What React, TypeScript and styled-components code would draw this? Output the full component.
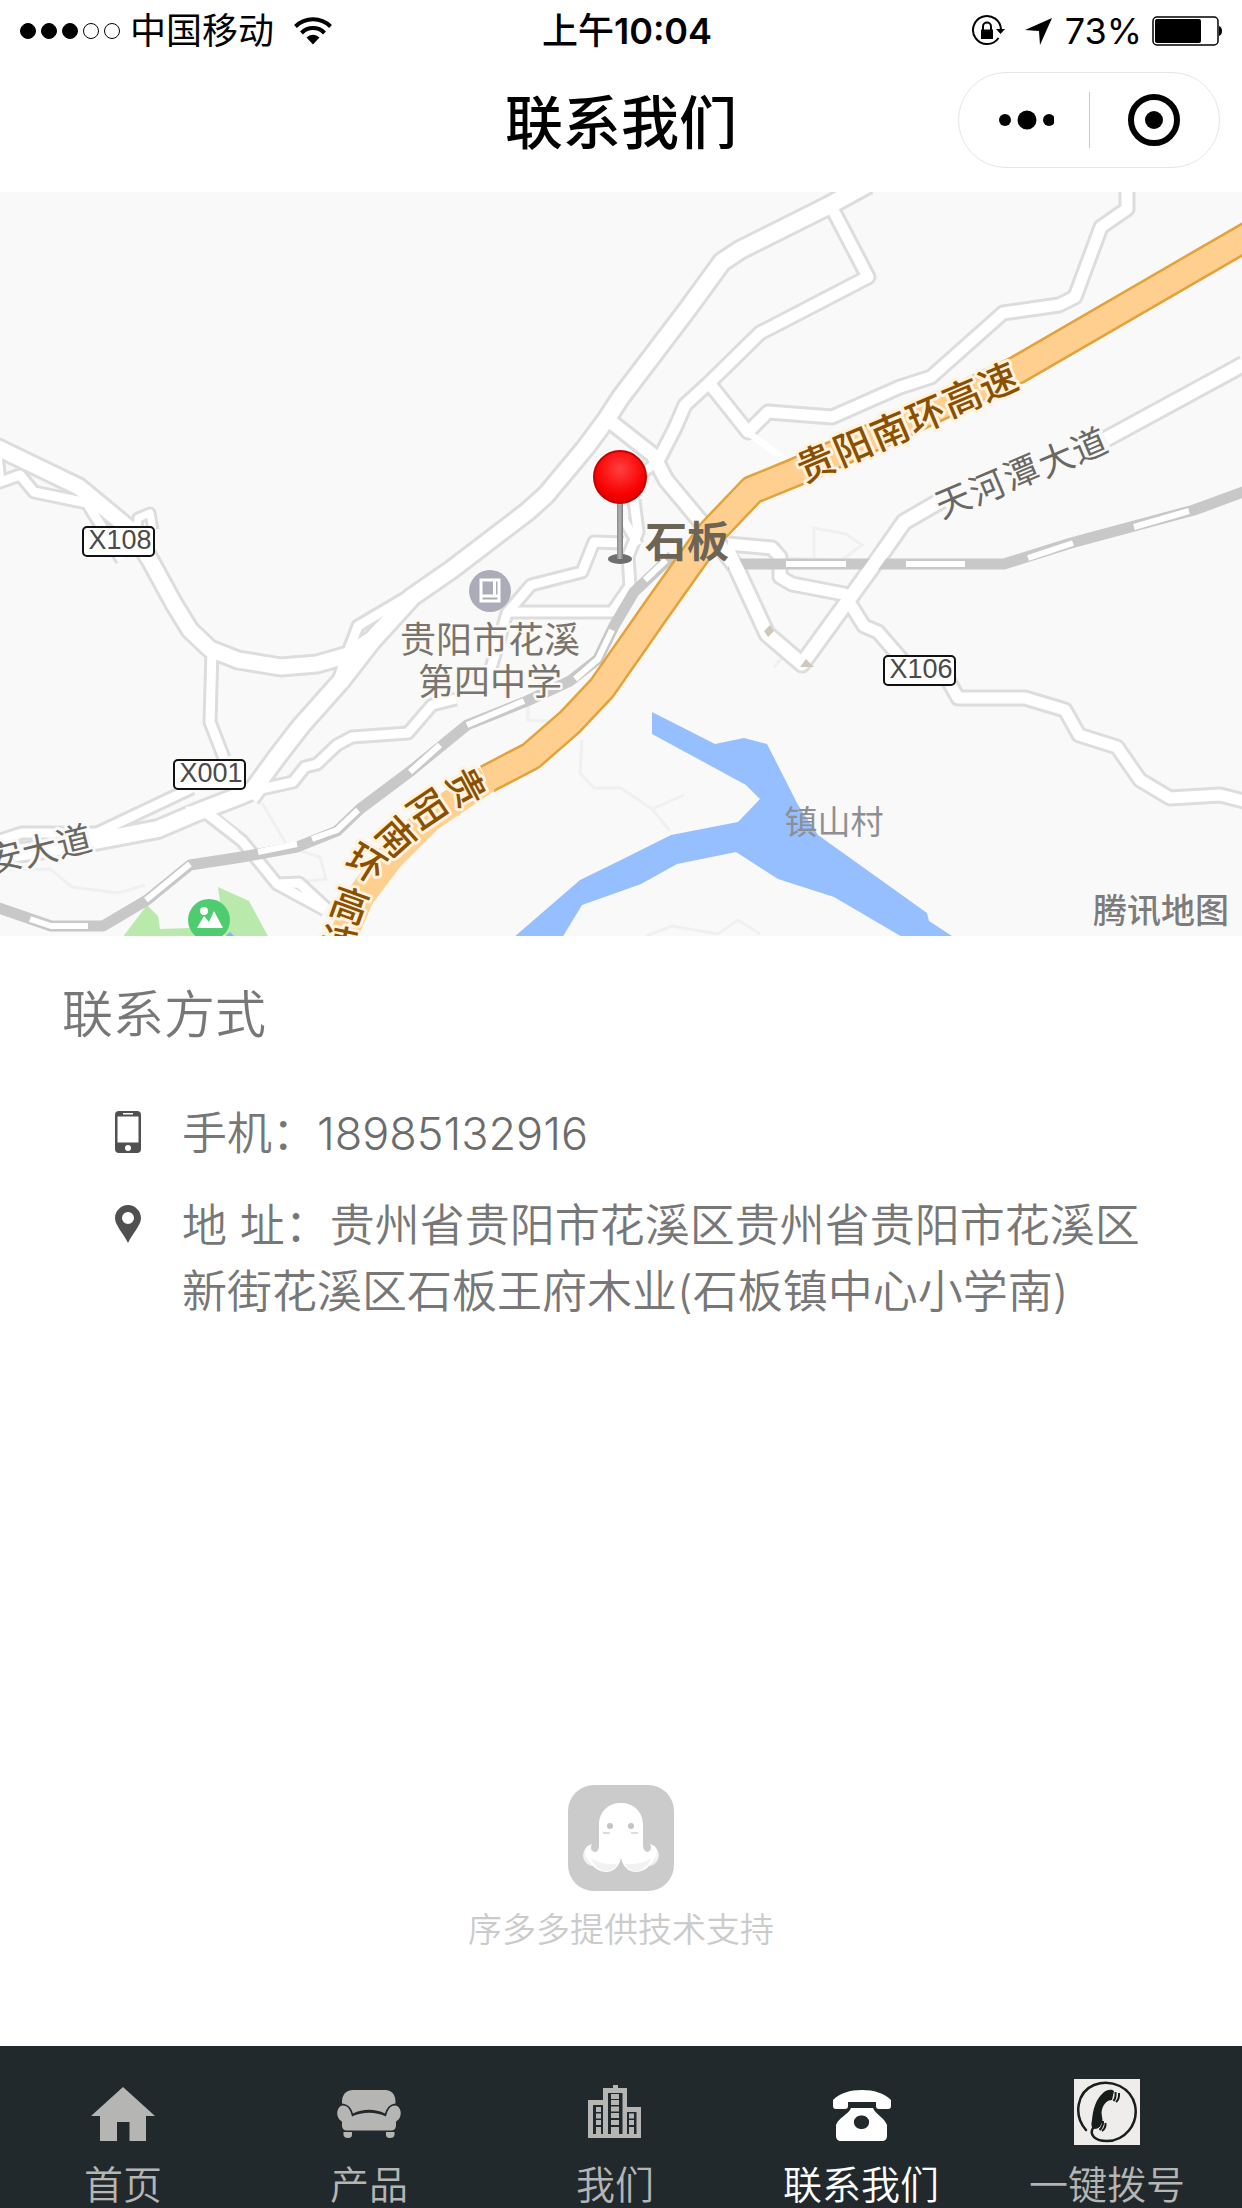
import React from "react";
import styled, { createGlobalStyle } from "styled-components";

const GlobalStyle = createGlobalStyle`
  * { box-sizing: border-box; }
  body {
    margin: 0;
    background: #fff;
    font-family: Inter, "Noto Sans CJK SC", sans-serif;
  }
  a { color: inherit; text-decoration: none; }
`;

const Screen = styled.div`
  display: flex;
  flex-direction: column;
  min-height: 100vh;
`;

/* ---------- status bar ---------- */

const StatusBar = styled.div`
  display: grid;
  grid-template-columns: 1fr auto 1fr;
  align-items: center;
  height: 60px;
  padding: 0 20px;
  font-size: 36px;
  line-height: 62px;
  color: #000;
`;

const StatusGroup = styled.div<{ $end?: boolean }>`
  display: flex;
  align-items: center;
  justify-content: ${(p) => (p.$end ? "flex-end" : "flex-start")};
  gap: 10px;
`;

const StatusTime = styled.time`
  padding-left: 12px;
  font-weight: 500;
`;

const Clock = styled.span`
  font-weight: 600;
`;

const Signal = styled.div`
  display: flex;
  gap: 5px;
`;

const SignalDot = styled.span<{ $on: boolean }>`
  width: 16px;
  height: 16px;
  border-radius: 50%;
  border: 1px solid #000;
  background: ${(p) => (p.$on ? "#000" : "transparent")};
`;

const WifiIcon = styled.svg`
  width: 38px;
  height: 30px;
  margin-left: 10px;
`;

const SmallIcon = styled.svg`
  width: 34px;
  height: 34px;
  margin-left: 6px;
`;

const BatteryIcon = styled.svg`
  width: 70px;
  height: 30px;
`;

/* ---------- header ---------- */

const Header = styled.header`
  display: grid;
  grid-template-columns: 1fr auto 1fr;
  align-items: center;
  height: 132px;
  padding: 0 22px 12px;
`;

const Title = styled.h1`
  grid-column: 2;
  margin: 0;
  padding-top: 6px;
  font-size: 58px;
  line-height: 72px;
  font-weight: 500;
`;

const Capsule = styled.div`
  justify-self: end;
  display: flex;
  align-items: center;
  width: 262px;
  height: 96px;
  border: 1px solid #e6e6e6;
  border-radius: 48px;
`;

const CapsuleButton = styled.button`
  flex: 1;
  display: flex;
  align-items: center;
  justify-content: center;
  height: 56px;
  padding: 0;
  border: 0;
  background: none;
  & + & {
    border-left: 1px solid #c9c9c9;
  }
`;

const CapsuleIcon = styled.svg`
  width: 60px;
  height: 54px;
`;

/* ---------- map ---------- */

const MapView = styled.svg`
  display: block;
  width: 100%;
  height: auto;
  background: #f9f9f9;
`;

/* ---------- contact details ---------- */

const Contact = styled.main`
  flex: 1;
  padding: 46px 62px 0;
  color: #777;
  font-weight: 350;
`;

const SectionTitle = styled.h2`
  margin: 0 0 53px;
  font-size: 51px;
  line-height: 66px;
  font-weight: 350;
`;

const ContactRow = styled.div`
  display: flex;
  gap: 40px;
  margin: 0 0 26px 52px;
  font-size: 45px;
  line-height: 66px;
`;

const RowIcon = styled.svg`
  flex: none;
  width: 28px;
  height: 66px;
  fill: #505050;
`;

const RowText = styled.p`
  flex: 1;
  margin: 0;
`;

const PhoneLink = styled.a`
  color: #6c6c6c;
  font-weight: 300;
`;

/* ---------- credit ---------- */

const Credit = styled.footer`
  display: flex;
  flex-direction: column;
  align-items: center;
  gap: 14px;
  padding-bottom: 92px;
  color: #cbcbcb;
  font-size: 34px;
  line-height: 48px;
  font-weight: 350;
`;

const CreditLogo = styled.svg`
  width: 108px;
  height: 108px;
`;

/* ---------- tab bar ---------- */

const TabBar = styled.nav`
  display: flex;
  padding: 33px 12px 0 0;
  background: #21292c;
`;

const Tab = styled.a<{ $active?: boolean }>`
  flex: 1;
  display: flex;
  flex-direction: column;
  align-items: center;
  gap: 17px;
  font-size: 39px;
  line-height: 46px;
  font-weight: 350;
  color: ${(p) => (p.$active ? "#fff" : "#b5b5b4")};
  white-space: nowrap;
`;

const TabIcon = styled.svg`
  width: 66px;
  height: 66px;
`;

const iconGrey = "#b5b5b4";

/* ---------- map data ---------- */

type Road = { w: number; d: string };

const roads: Road[] = [
  { w: 9, d: "M-4 446 0 482 20 475 34 492 87 503 103 529 122 560" },
  { w: 7, d: "M137 528 138 518 150 513 153 530" },
  { w: 9, d: "M0 840 22 833 97 833 192 788" },
  { w: 9, d: "M212 649 210 722 224 758" },
  { w: 9, d: "M253 800 261 789 293 782 305 767 317 764 337 745 352 737 408 733 432 705 456 699" },
  { w: 9, d: "M489 675 507 613 531 585 582 572 594 542 624 543" },
  { w: 9, d: "M507 612 612 612 630 586 628 556 638 532 634 500" },
  { w: 8, d: "M624 520 638 545M653 465 634 480 628 500" },
  { w: 9, d: "M206 813 242 841 277 884 325 910M277 884 299 883 326 908" },
  { w: 9, d: "M412 594 358 626 345 660 337 684" },
  { w: 15, d: "M-4 447 79 487 131 530 150 560 174 604 190 630 210 649 238 660 281 667 317 664 348 655 372 639 412 597" },
  { w: 11, d: "M833 210 868 277 760 333 709 383 685 405 675 428 657 463" },
  { w: 11, d: "M709 383 748 432 768 412 832 417 900 387 931 377 1003 313 1059 305 1075 297 1101 227 1127 209 1127 190" },
  { w: 11, d: "M728 544 772 548 780 557 780 577 792 584 844 594 864 626 878 632 904 662 948 680 958 698 1025 698 1065 710 1079 735 1117 747 1140 780 1170 798 1220 795 1244 801" },
  { w: 13, d: "M606 418 653 455 666 480 716 540 736 567 767 634 802 664 876 562 904 522 942 500M1106 439 1244 364" },
  { w: 16, d: "M868 184 828 206 740 250 722 262 687 310 621 397 606 420 586 447 546 495 527 512 451 570 412 597 372 641 341 681 301 726 277 757 253 790 242 795 198 812 158 829 79 844 -4 856" },
];

const footpaths =
  "M0 870 50 869 72 887 118 893 145 885M262 803 288 847 320 857 326 879 290 883M582 740 580 773 594 788 621 788M621 788 652 809 684 795M652 809 670 831M646 936 672 926 718 934 738 920 760 934M814 566 814 528 846 534 862 545 842 560 784 558M784 655 774 667M528 703 528 720 560 722";

const rails = [
  "M-4 907 51 926 103 926 147 900 190 865 242 857 297 847 337 831 360 809 412 770 467 725 527 701 570 681 598 659 614 626 634 592 672 556",
  "M728 564 1004 564 1071 543 1194 510 1246 491",
];

const railGaps =
  "M30 919 51 926 88 926M146 900 190 864M258 852 297 844M312 839 337 830 358 810M410 772 440 745M467 725 524 701M575 679 598 659 612 630M645 580 666 560M786 564 846 564M906 564 965 564M1028 558 1073 543M1134 527 1189 511";

const highway =
  "M1262 228 1017 370 900 425 796 472 752 490 711 533 655 612 602 688 570 722 531 756 487 779";
const highwaySouth = "M487 779 428 819 390 857 360 897 341 941";

type Glyph = [char: string, cx: number, cy: number, angle: number];

/** Lays a street name along its road: each glyph is given by its centre and its angle. */
function StreetName({
  glyphs,
  size,
  color,
  halo,
  weight = 400,
}: {
  glyphs: Glyph[];
  size: number;
  color: string;
  halo: string;
  weight?: number;
}) {
  const place = glyphs.map(([, cx, cy, deg]) => {
    const a = (deg * Math.PI) / 180;
    const dx = -size / 2;
    const dy = size * 0.38;
    return [
      cx + dx * Math.cos(a) - dy * Math.sin(a),
      cy + dx * Math.sin(a) + dy * Math.cos(a),
    ];
  });
  return (
    <text
      x={place.map((p) => Math.round(p[0])).join(" ")}
      y={place.map((p) => Math.round(p[1])).join(" ")}
      rotate={glyphs.map((g) => g[3]).join(" ")}
      fontSize={size}
      fontWeight={weight}
      fill={color}
      stroke={halo}
      strokeWidth={6}
      strokeLinejoin="round"
      paintOrder="stroke"
    >
      {glyphs.map((g) => g[0]).join("")}
    </text>
  );
}

function RoadBadge({ x, y, code }: { x: number; y: number; code: string }) {
  return (
    <g>
      <rect x={x} y={y} width="71" height="29" rx="4" fill="#fff" stroke="#111" strokeWidth="2" />
      <text x={x + 37} y={y + 22} textAnchor="middle" fontSize="27" fill="#4a4a4a" fontFamily="'Liberation Sans', sans-serif">
        {code}
      </text>
    </g>
  );
}

function LocationMap() {
  return (
    <MapView viewBox="0 192 1242 744" role="img" aria-label="地图">
      <defs>
        <radialGradient id="pinHead" cx="0.5" cy="0.35" r="0.65">
          <stop offset="0" stopColor="#ff4040" />
          <stop offset="0.75" stopColor="#f80000" />
          <stop offset="1" stopColor="#d80000" />
        </radialGradient>
        <linearGradient id="pinStem">
          <stop offset="0" stopColor="#8a8a8a" />
          <stop offset="0.5" stopColor="#b5b5b5" />
          <stop offset="1" stopColor="#777" />
        </linearGradient>
      </defs>

      <path fill="#b9eaac" d="M122 938 147 905 158 916 160 929 190 928 215 938ZM218 887 249 901 269 938 225 938Z" />
      <path
        fill="#96bfff"
        d="M652 712 715 744 744 738 767 744 798 805 818 835 927 913 929 921 955 938 904 938 834 897 778 879 736 852 677 864 641 884 582 905 562 938 513 938 580 880 621 860 671 835 738 822 760 799 746 785 652 734Z"
      />

      <path d={footpaths} fill="none" stroke="#f0f0f0" strokeWidth="3" />
      <g fill="none" strokeLinejoin="round">
        {roads.map((r) => (
          <path key={r.d} d={r.d} stroke="#dddddd" strokeWidth={r.w + 6} />
        ))}
        {roads.map((r) => (
          <path key={r.d} d={r.d} stroke="#fff" strokeWidth={r.w} />
        ))}
        <path d="M750 434 788 462M186 810 206 810 236 834" stroke="#fff" strokeWidth="7" />
        {rails.map((d) => (
          <path key={d} d={d} stroke="#c8c8c8" strokeWidth="11" />
        ))}
        <path d={railGaps} stroke="#fff" strokeWidth="6" />
        <path d="M864 578 885 549M727 549 739 573" stroke="#fff" strokeWidth="13" />
        <path d={highway} stroke="#e3a23a" strokeWidth="30" />
        <path d={highway} stroke="#ffcf8f" strokeWidth="25" />
        <path d={highwaySouth} stroke="#ffcf8f" strokeWidth="28" />
      </g>
      <path fill="#cfc8bb" d="M764 631 770 625 774 631 768 637ZM800 667 806 659 814 667Z" />

      <RoadBadge x={83} y={527} code="X108" />
      <RoadBadge x={174} y={760} code="X001" />
      <RoadBadge x={884} y={656} code="X106" />

      <StreetName
        size={38}
        color="#8a5000"
        halo="#fff3df"
        weight={500}
        glyphs={[["贵", 816, 462, -23], ["阳", 853, 446, -23], ["南", 890, 430, -23], ["环", 926, 414, -23], ["高", 962, 397, -23], ["速", 998, 381, -23]]}
      />
      <StreetName
        size={38}
        color="#8a5000"
        halo="#fff3df"
        weight={500}
        glyphs={[["贵", 467, 787, 62], ["阳", 428, 809, 56], ["南", 396, 836, 48], ["环", 367, 863, 32], ["高", 350, 905, 20], ["速", 339, 943, 12]]}
      />
      <StreetName
        size={35}
        color="#6b6762"
        halo="#f9f9f9"
        weight={400}
        glyphs={[["天", 953, 500, -23], ["河", 987, 487, -23], ["潭", 1021, 472, -23], ["大", 1056, 459, -23], ["道", 1089, 445, -23]]}
      />
      <StreetName
        size={35}
        color="#6b6762"
        halo="#f9f9f9"
        glyphs={[["安", 5, 857, -14], ["大", 40, 850, -14], ["道", 74, 841, -14]]}
      />

      <circle cx="490" cy="591" r="21" fill="#abacb8" />
      <path fill="none" stroke="#fff" strokeWidth="3" d="M481 580h18v21h-18ZM481 596h18M494.500 581v15" />

      <circle cx="209" cy="920" r="21" fill="#4fcb70" />
      <path fill="#fff" d="M197 928 204 916 209 922 214 911 223 928Z" />
      <circle cx="204" cy="911" r="4" fill="#fff" />
      <path fill="#7fb4f5" d="M224 938 230 932 236 938Z" />

      <g textAnchor="middle" strokeLinejoin="round" paintOrder="stroke">
        <g fontSize="36" fill="#78746f" stroke="#fbf9f5" strokeWidth="5">
          <text x="490" y="653">贵阳市花溪</text>
          <text x="490" y="695">第四中学</text>
        </g>
        <text x="687" y="557" fontSize="42" fontWeight="700" fill="#6c6455">石板</text>
        <text x="834" y="834" fontSize="33" fill="#8d8f93">镇山村</text>
        <text x="1161" y="923" fontSize="34" fontWeight="500" fill="#7c7c7c">腾讯地图</text>
      </g>

      <ellipse cx="620" cy="559" rx="12" ry="5" fill="#6f6f6f" />
      <rect x="617" y="500" width="6" height="59" fill="url(#pinStem)" />
      <circle cx="620" cy="477" r="26" fill="url(#pinHead)" stroke="#c80000" strokeWidth="2" />
    </MapView>
  );
}

/* ---------- tabs ---------- */

const homeIcon = <path fill={iconGrey} d="M33 8 65 37H56V62H39.500V43H27V62H10V37H1Z" />;

const sofaIcon = (
  <g fill={iconGrey}>
    <path d="M17 11H49C56 11 60 16 59.500 24.500 53 25 50.500 30 49 34.500 39 29.500 27 29.500 17 34.500 15.500 30 13 25 6 24.500 5.500 16 10 11 17 11Z" />
    <path d="M7 26.500C12 26.500 14.500 31 16 37.500 27 32.500 39 32.500 50 37.500 51.500 31 54 26.500 59 26.500 64 26.500 66 34 64 38 63 41 60 42 60 43V46C60 50 58 51.500 55 51.500H11C8 51.500 6 50 6 46V43C6 42 3 41 2 38 0 34 2 26.500 7 26.500Z" />
    <path d="M7.500 53H16V56Q16 59 12 59 8 59 7.500 56ZM50 53H58.500V56Q58 59 54 59 50 59 50 56Z" />
  </g>
);

const officeIcon = (
  <g fill={iconGrey}>
    <path
      fillRule="evenodd"
      d="M6 21H21V9H31V6H36V9H45V28H59V59H6ZM11 26V55H21V26ZM26 14V55H40.500V14ZM45 33V55H54.500V33Z"
    />
    {[15, 21, 27.5, 34, 41].map((y) => (
      <rect key={y} x="29" y={y} width="8" height="5" />
    ))}
    {[28, 34.5, 41].map((y) => (
      <rect key={y} x="14" y={y} width="5" height="5" />
    ))}
    {[34.5, 41].map((y) => (
      <rect key={y} x="47" y={y} width="5" height="5" />
    ))}
    <path d="M29 48h8v8h-8ZM14 48h5v8h-5ZM47 48h5v8h-5Z" />
  </g>
);

const telephoneIcon = (
  <g fill="#fff">
    <path d="M5 21C12 14 22 11 34 11 46 11 56 14 63 21V27C63 29 62 30 60 30H51C49 30 48 29 48 27V23H20V27C20 29 19 30 17 30H8C6 30 5 29 5 27Z" />
    <path
      fillRule="evenodd"
      d="M23 29H45C48 36 56 38 59 46V57C59 60 57 62 54 62H13C10 62 8 60 8 57V46C11 38 20 36 23 29ZM33.500 36.500A6.800 6.800 0 1 0 33.500 50 6.800 6.800 0 1 0 33.500 36.500Z"
    />
  </g>
);

const dialIcon = (
  <g>
    <rect width="66" height="66" fill="#efedeb" />
    <path
      fill="none"
      stroke="#171d1a"
      strokeWidth="2.500"
      strokeLinecap="round"
      d="M12 51C-1 36 3 13 20 6 38-1 57 9 61 26 65 46 50 62 33 62 21 62 15 56 19 49"
    />
    <path fill="#171d1a" d="M29 14C33 10 38 10 40 12L38 21C32 21 28 27 27.500 34L28.500 41C28 46 25 50 21 50 17 49 17 46 18 41 19 30 22 20 29 14Z" />
    <path fill="none" stroke="#171d1a" strokeWidth="2" d="M41.500 13Q42 19 39.500 22M45 14Q45.500 20 42 23M29 42Q29.500 47 25.500 51M31.500 44Q32 49 28 52" />
  </g>
);

const tabs = [
  { label: "首页", icon: homeIcon },
  { label: "产品", icon: sofaIcon },
  { label: "我们", icon: officeIcon },
  { label: "联系我们", icon: telephoneIcon, active: true },
  { label: "一键拨号", icon: dialIcon },
];

export default function App() {
  return (
    <Screen>
      <GlobalStyle />
      <StatusBar>
        <StatusGroup>
          <Signal>
            {[true, true, true, false, false].map((on, i) => (
              <SignalDot key={i} $on={on} />
            ))}
          </Signal>
          <span>中国移动</span>
          <WifiIcon viewBox="0 0 38 30" fill="none" stroke="#000" strokeWidth="4">
            <path d="M1.500 10.500A25 25 0 0 1 36.500 10.500M7.500 17A16 16 0 0 1 30.500 17" />
            <path d="M19 28.500 12.500 21.500A9 9 0 0 1 25.500 21.500Z" fill="#000" stroke="none" />
          </WifiIcon>
        </StatusGroup>
        <StatusTime>
          上午<Clock>10:04</Clock>
        </StatusTime>
        <StatusGroup $end>
          <SmallIcon viewBox="0 0 34 34">
            <path d="M27.500 24A14 14 0 1 1 30 16" fill="none" stroke="#000" strokeWidth="2" />
            <path d="M25 15H34L29.500 20Z" />
            <path d="M10 15.500H22V25H10Z" />
            <path d="M12 16V12.500A4 4 0 0 1 20 12.500V16" fill="none" stroke="#000" strokeWidth="2" />
          </SmallIcon>
          <SmallIcon viewBox="0 0 34 34">
            <path d="M31 4 19 31 18 17 4 16Z" />
          </SmallIcon>
          <span>73%</span>
          <BatteryIcon viewBox="0 0 70 30">
            <rect x="1" y="1" width="65" height="28" rx="4" fill="none" stroke="#000" strokeWidth="1.500" />
            <rect x="3" y="3" width="46" height="24" rx="2" />
            <path d="M67 10Q70 11 70 15T67 20Z" />
          </BatteryIcon>
        </StatusGroup>
      </StatusBar>

      <Header>
        <Title>联系我们</Title>
        <Capsule>
          <CapsuleButton type="button" aria-label="更多">
            <CapsuleIcon viewBox="0 0 60 54">
              <circle cx="11" cy="27" r="6" />
              <circle cx="33" cy="27" r="9.500" />
              <circle cx="55" cy="27" r="6" />
            </CapsuleIcon>
          </CapsuleButton>
          <CapsuleButton type="button" aria-label="关闭">
            <CapsuleIcon viewBox="0 0 60 54">
              <circle cx="30" cy="27" r="23" fill="none" stroke="#000" strokeWidth="6" />
              <circle cx="30" cy="27" r="9" />
            </CapsuleIcon>
          </CapsuleButton>
        </Capsule>
      </Header>

      <LocationMap />

      <Contact>
        <SectionTitle>联系方式</SectionTitle>
        <ContactRow>
          <RowIcon viewBox="0 0 28 66">
            <path
              fillRule="evenodd"
              d="M5 10H23Q27 10 27 14V48Q27 52 23 52H5Q1 52 1 48V14Q1 10 5 10ZM3.500 15.500V41.500H24.500V15.500ZM9 12V13.500H19V12ZM14 44A3 3 0 1 0 14 50 3 3 0 1 0 14 44Z"
            />
          </RowIcon>
          <RowText>
            手机：<PhoneLink href="tel:18985132916">18985132916</PhoneLink>
          </RowText>
        </ContactRow>
        <ContactRow>
          <RowIcon viewBox="0 0 28 66">
            <path
              fillRule="evenodd"
              d="M14 12C21 12 27 18 27 25 27 32 19 40 14 50 9 40 1 32 1 25 1 18 7 12 14 12ZM14 19A6 6 0 1 0 14 31 6 6 0 1 0 14 19Z"
            />
          </RowIcon>
          <RowText>地 址：贵州省贵阳市花溪区贵州省贵阳市花溪区新街花溪区石板王府木业(石板镇中心小学南)</RowText>
        </ContactRow>
      </Contact>

      <Credit>
        <CreditLogo viewBox="0 0 108 108">
          <defs>
            <linearGradient id="legShade" x1="0" y1="0" x2="0" y2="1">
              <stop offset="0" stopColor="#fff" />
              <stop offset="1" stopColor="#ececec" />
            </linearGradient>
          </defs>
          <rect x="1" y="1" width="106" height="106" rx="26" fill="#cbcbcb" />
          <path
            fill="url(#legShade)"
            d="M25 60C15 63 13 76 22 81 25 83 31 82 35 78L33 68C26 69 22 66 25 60ZM83 60C93 63 95 76 86 81 83 83 77 82 73 78L75 68C82 69 86 66 83 60Z"
          />
          <path
            fill="#fff"
            d="M32 41C32 27 42 19 54 19 66 19 76 27 76 41V61C76 66 79 69 83 68 89 68 88 60 84 59 92 63 90 76 82 82 75 90 58 92 54 74 50 92 33 90 26 82 18 76 16 63 24 59 20 60 19 68 26 68 30 69 32 66 32 61Z"
          />
          <path fill="#f2f2f2" d="M24 74C32 80 42 80 50 80 46 90 30 91 24 74ZM84 74C76 80 66 80 58 80 62 90 78 91 84 74Z" />
          <g fill="#c4c4c4">
            <circle cx="43" cy="42" r="3" />
            <circle cx="64" cy="42" r="3" />
          </g>
          <path stroke="#dcdcdc" strokeWidth="2" d="M36 49h7M64 49h7" />
        </CreditLogo>
        <span>序多多提供技术支持</span>
      </Credit>

      <TabBar>
        {tabs.map((t) => (
          <Tab key={t.label} href="#" $active={t.active} aria-current={t.active ? "page" : undefined}>
            <TabIcon viewBox="0 0 66 66">{t.icon}</TabIcon>
            <span>{t.label}</span>
          </Tab>
        ))}
      </TabBar>
    </Screen>
  );
}
